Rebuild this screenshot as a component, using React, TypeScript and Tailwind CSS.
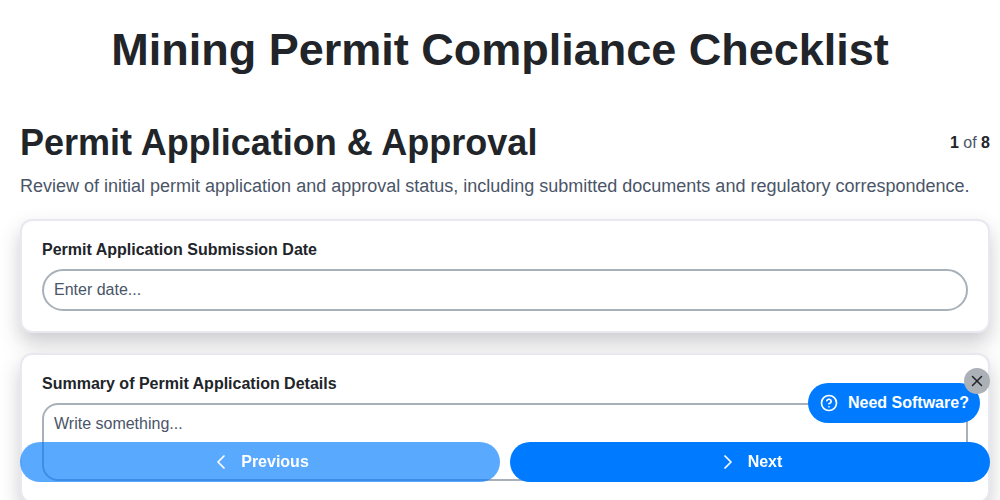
import React from "react";
import { ChevronLeft, ChevronRight, CircleHelp, X } from "lucide-react";

const App: React.FC = () => {
  return (
    <div className="h-[500px] overflow-hidden bg-white font-['Liberation_Sans',Arial,sans-serif] text-[#212529]">
      <h1 className="pt-[22px] text-center text-[45px] leading-[56px] font-bold">
        Mining Permit Compliance Checklist
      </h1>

      <div className="pt-[38px] pr-[10px] pl-5">
        {/* section header */}
        <div className="flex items-start justify-between">
          <h2 className="text-[36px] leading-[54px] font-bold">
            Permit Application &amp; Approval
          </h2>
          <p className="pt-[15px] text-base leading-6 text-[#4a5568]">
            <b className="text-[#212529]">1</b> of{" "}
            <b className="text-[#212529]">8</b>
          </p>
        </div>
        <p className="pt-[3px] text-lg leading-[27px] text-[#4a5568]">
          Review of initial permit application and approval status, including
          submitted documents and regulatory correspondence.
        </p>

        {/* date field */}
        <div className="mt-[19px] rounded-xl border-2 border-[#e8e8f0] bg-white px-5 pt-[17px] pb-[20px] shadow-[0_10px_20px_rgba(50,50,65,0.25)]">
          <label className="block text-base leading-6 font-bold">
            Permit Application Submission Date
          </label>
          <input
            placeholder="Enter date..."
            className="mt-[7px] h-[42px] w-full rounded-[21px] border-2 border-[#a8b0ba] px-[10px] text-base text-[#4a5568] outline-none placeholder:text-[#4a5568]"
          />
        </div>

        {/* summary field */}
        <div className="mt-[20px] rounded-xl border-2 border-[#e8e8f0] bg-white px-5 pt-[17px] pb-[20px] shadow-[0_10px_20px_rgba(50,50,65,0.25)]">
          <label className="block text-base leading-6 font-bold">
            Summary of Permit Application Details
          </label>
          <textarea
            placeholder="Write something..."
            className="mt-[7px] block h-[78px] w-full resize-none rounded-2xl border-2 border-[#a8b0ba] px-[10px] py-[7px] text-base leading-6 text-[#4a5568] outline-none placeholder:text-[#4a5568]"
          />
        </div>
      </div>

      {/* bottom nav */}
      <div className="fixed right-[10px] bottom-[18px] left-5 flex gap-[10px]">
        <button className="flex h-10 flex-1 items-center justify-center gap-2 rounded-[20px] bg-[#007bff]/65 pr-[2px] text-base font-bold text-white">
          <ChevronLeft size={24} strokeWidth={1.75} />
          Previous
        </button>
        <button className="flex h-10 flex-1 items-center justify-center gap-2 rounded-[20px] bg-[#007bff] pr-[2px] text-base font-bold text-white">
          <ChevronRight size={24} strokeWidth={1.75} />
          Next
        </button>
      </div>

      {/* floating promo */}
      <button className="fixed top-[383px] right-5 flex h-10 w-[172px] items-center gap-[10px] rounded-[20px] bg-[#007bff] pl-[12px] text-base font-bold text-white">
        <CircleHelp size={18} strokeWidth={2.25} />
        Need Software?
      </button>
      <button className="fixed top-[368px] right-[10px] flex h-[26px] w-[26px] items-center justify-center rounded-full bg-[#abb1b6] text-[#212529]">
        <X size={18} strokeWidth={2} />
      </button>
    </div>
  );
};

export default App;
